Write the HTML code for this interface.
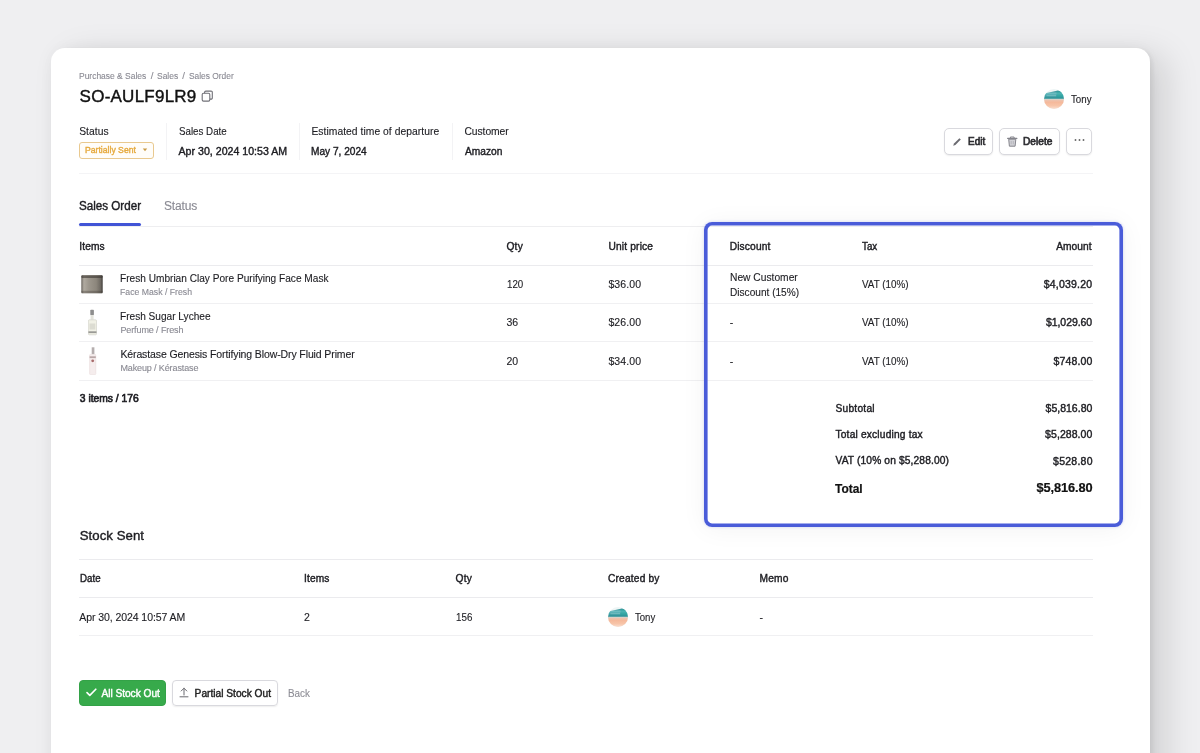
<!DOCTYPE html>
<html><head><meta charset="utf-8">
<style>
*{margin:0;padding:0;box-sizing:border-box}
html,body{width:1200px;height:753px;overflow:hidden;background:#efeff1;font-family:"Liberation Sans",sans-serif;color:#1d1d22}
.card{position:absolute;left:51px;top:48px;width:1099px;height:760px;background:#fff;border-radius:14px;box-shadow:0 0 18px rgba(0,0,0,0.05),16px 7px 34px rgba(0,0,0,0.13),3px 1px 4px rgba(0,0,0,0.05)}
.a{position:absolute;white-space:nowrap;line-height:1}
.vsep{position:absolute;width:1px;background:#f3f3f5;top:122.5px;height:37.5px}
.hl{position:absolute;height:1px;background:#ebebee}
.btn{position:absolute;top:128px;height:27px;border:1px solid #d9d9de;border-radius:5px;background:#fff;box-shadow:0 1px 1.5px rgba(0,0,0,0.07)}
.box{position:absolute;left:703.6px;top:221.9px;width:419.2px;height:305.1px;border-radius:8px;box-shadow:inset 0 0 0 3.6px #4a5cd9,0 0 3px rgba(74,92,217,0.25),0 2px 26px rgba(0,0,0,0.05)}
.av{position:absolute;width:21px;height:21px;border-radius:50%;overflow:hidden;background:linear-gradient(180deg,#1f8f9a 0%,#3aa7ae 25%,#8fcfd0 42%,#f2d2bd 52%,#f4b994 70%,#f7c8aa 100%)}
.wrap{position:absolute;left:0;top:0;width:1200px;height:753px;will-change:transform;overflow:hidden}
</style></head><body><div class="wrap">
<div class="card"></div>

<!-- copy icon -->
<svg class="a" style="left:201px;top:90px" width="13" height="12" viewBox="0 0 13 12"><rect x="1.2" y="3.3" width="7.6" height="7.8" rx="1.3" fill="none" stroke="#707077" stroke-width="1.1"/><path d="M3.6 3.2V2.3a1.2 1.2 0 0 1 1.2-1.2h5.3a1.2 1.2 0 0 1 1.2 1.2v5.6a1.2 1.2 0 0 1-1.2 1.2h-1.2" fill="none" stroke="#707077" stroke-width="1.1"/></svg>

<!-- avatar top -->
<svg class="a" style="left:1043.8px;top:89.4px" width="20" height="20" viewBox="0 0 20 20">
<defs><clipPath id="ca"><circle cx="10" cy="10" r="10"/></clipPath>
<linearGradient id="ta" x1="0" y1="0" x2="0" y2="1"><stop offset="0" stop-color="#2a8990"/><stop offset="0.3" stop-color="#6dbdc1"/><stop offset="0.55" stop-color="#49a8ad"/><stop offset="0.82" stop-color="#2f9197"/><stop offset="1" stop-color="#a6cccb"/></linearGradient>
<linearGradient id="pa" x1="0" y1="0" x2="0" y2="1"><stop offset="0" stop-color="#e9c6b6"/><stop offset="0.3" stop-color="#f5b99b"/><stop offset="0.65" stop-color="#f7c4a8"/><stop offset="1" stop-color="#fadfd1"/></linearGradient></defs>
<g clip-path="url(#ca)"><rect width="20" height="20" fill="#eef5f5"/>
<path d="M0 4.6L6 3.2L14 1.6L17.5 2.4L20 5.5V10.6H0z" fill="url(#ta)"/>
<path d="M12.5 2.2L17.5 2.6L20 5.5V8.5H12.5z" fill="#22a79e" opacity="0.45"/>
<path d="M2.5 6.6H12" stroke="#ffffff" stroke-opacity="0.2" stroke-width="1.1"/>
<rect y="10.4" width="20" height="9.6" fill="url(#pa)"/></g></svg>

<!-- meta -->
<div class="a" style="left:79px;top:142px;width:75px;height:17px;border:1px solid #e9c98f;border-radius:3px;background:#fffdf9"></div>
<svg class="a" style="left:142px;top:148px" width="6" height="4" viewBox="0 0 6 4"><path d="M0.8 0.6h4.4L3 3.3z" fill="#c99a45"/></svg>
<div class="vsep" style="left:166px"></div>
<div class="vsep" style="left:299px"></div>
<div class="vsep" style="left:452px"></div>

<!-- buttons -->
<div class="btn" style="left:944px;width:49px"></div>
<svg class="a" style="left:952px;top:136.5px" width="10" height="10" viewBox="0 0 10 10"><path d="M1.2 8.8L2 6.6L7.4 1.2L8.8 2.6L3.4 8z" fill="#6a6a70"/></svg>
<div class="btn" style="left:999px;width:61px"></div>
<svg class="a" style="left:1007px;top:135.8px" width="10.5" height="11" viewBox="0 0 10.5 11"><path d="M3.4 2V1h3.7v1" fill="none" stroke="#85858c" stroke-width="1"/><path d="M0.6 2.3h9.3" stroke="#85858c" stroke-width="1.2" stroke-linecap="round"/><path d="M1.7 3.2l0.7 7h5.7l0.7-7z" fill="#d2d2d7" stroke="#85858c" stroke-width="1" stroke-linejoin="round"/><path d="M4.2 5v3.3M6.3 5v3.3" stroke="#a9a9b0" stroke-width="0.7"/></svg>
<div class="btn" style="left:1066px;width:26px"></div>
<svg class="a" style="left:1074px;top:138px" width="11" height="4" viewBox="0 0 11 4"><circle cx="1.5" cy="2" r="0.95" fill="#666"/><circle cx="5.5" cy="2" r="0.95" fill="#666"/><circle cx="9.5" cy="2" r="0.95" fill="#666"/></svg>

<div class="hl" style="left:79px;top:172.5px;width:1014px;height:1.5px;background:#f4f4f6"></div>

<!-- tabs -->
<div class="hl" style="left:79px;top:226px;width:1014px;background:#eeeef0"></div>
<div class="a" style="left:79.3px;top:223.3px;width:62px;height:3px;background:#4154d6;border-radius:1.5px"></div>

<div class="hl" style="left:79px;top:264.5px;width:1014px"></div>
<div class="hl" style="left:79px;top:303px;width:1014px;background:#f0f0f2"></div>
<div class="hl" style="left:79px;top:341px;width:1014px;background:#f0f0f2"></div>
<div class="hl" style="left:79px;top:379.5px;width:1014px;background:#f0f0f2"></div>

<!-- product thumbs -->
<svg class="a" style="left:81px;top:274.5px" width="22" height="19" viewBox="0 0 22 19">
<defs><linearGradient id="jg" x1="0" y1="0" x2="1" y2="0"><stop offset="0" stop-color="#6a655f"/><stop offset="0.12" stop-color="#b0aaa0"/><stop offset="0.35" stop-color="#9d978d"/><stop offset="0.7" stop-color="#8c867c"/><stop offset="0.9" stop-color="#6e6962"/><stop offset="1" stop-color="#403c38"/></linearGradient></defs>
<rect x="0.3" y="0.3" width="21.4" height="18" rx="1.2" fill="url(#jg)"/>
<rect x="0.3" y="0.3" width="21.4" height="2.6" rx="1" fill="#3a3531" opacity="0.6"/>
<rect x="0.3" y="15.8" width="21.4" height="2.5" fill="#3e3935" opacity="0.35"/>
</svg>
<svg class="a" style="left:88px;top:309px" width="9" height="27" viewBox="0 0 9 27">
<rect x="2.3" y="0.7" width="3.6" height="5.6" rx="0.8" fill="#8e8e8e"/>
<rect x="2.6" y="6" width="3" height="4.8" fill="#e4e4dc"/>
<rect x="0.4" y="10.8" width="8.1" height="15" rx="1" fill="#f1f1e6" stroke="#cfcfc6" stroke-width="0.6"/>
<rect x="1.5" y="14.5" width="5.8" height="6" fill="#dcdcd2"/>
<rect x="0.4" y="22.3" width="8.1" height="1.8" fill="#9a9a96"/>
</svg>
<svg class="a" style="left:88.5px;top:347px" width="8" height="28" viewBox="0 0 8 28">
<rect x="2.7" y="0.3" width="2.7" height="7" fill="#b5aeae"/>
<rect x="0.6" y="7.4" width="6.2" height="20.2" rx="0.8" fill="#f5eded" stroke="#e6d8d8" stroke-width="0.5"/>
<rect x="0.6" y="9.3" width="6.2" height="1.8" fill="#b9a7a7"/>
<circle cx="3.7" cy="13.8" r="1.4" fill="#a86b6b"/>
</svg>

<!-- blue highlight -->
<div class="box"></div>

<!-- stock sent -->
<div class="hl" style="left:79px;top:559px;width:1014px"></div>
<div class="hl" style="left:79px;top:597px;width:1014px"></div>
<svg class="a" style="left:607.6px;top:606.8px" width="20" height="20" viewBox="0 0 20 20">
<defs><clipPath id="cb"><circle cx="10" cy="10" r="10"/></clipPath>
<linearGradient id="tb" x1="0" y1="0" x2="0" y2="1"><stop offset="0" stop-color="#2a8990"/><stop offset="0.3" stop-color="#6dbdc1"/><stop offset="0.55" stop-color="#49a8ad"/><stop offset="0.82" stop-color="#2f9197"/><stop offset="1" stop-color="#a6cccb"/></linearGradient>
<linearGradient id="pb" x1="0" y1="0" x2="0" y2="1"><stop offset="0" stop-color="#e9c6b6"/><stop offset="0.3" stop-color="#f5b99b"/><stop offset="0.65" stop-color="#f7c4a8"/><stop offset="1" stop-color="#fadfd1"/></linearGradient></defs>
<g clip-path="url(#cb)"><rect width="20" height="20" fill="#eef5f5"/>
<path d="M0 4.6L6 3.2L14 1.6L17.5 2.4L20 5.5V10.6H0z" fill="url(#tb)"/>
<path d="M12.5 2.2L17.5 2.6L20 5.5V8.5H12.5z" fill="#22a79e" opacity="0.45"/>
<path d="M2.5 6.6H12" stroke="#ffffff" stroke-opacity="0.2" stroke-width="1.1"/>
<rect y="10.4" width="20" height="9.6" fill="url(#pb)"/></g></svg>
<div class="hl" style="left:79px;top:634.5px;width:1014px;background:#f0f0f2"></div>

<!-- bottom buttons -->
<div class="a" style="left:79px;top:680px;width:87px;height:26px;background:#37aa4b;border:1px solid #33a247;border-radius:4px"></div>
<svg class="a" style="left:86px;top:688px" width="11" height="9" viewBox="0 0 11 9"><path d="M1 4.6L3.8 7.4L9.8 1.2" fill="none" stroke="#fff" stroke-width="1.6" stroke-linecap="round" stroke-linejoin="round"/></svg>
<div class="a" style="left:172px;top:680px;width:105.5px;height:26.2px;border:1px solid #d9d9de;border-radius:4px;box-shadow:0 1px 1.5px rgba(0,0,0,0.07)"></div>
<svg class="a" style="left:179px;top:687px" width="10" height="11" viewBox="0 0 10 11"><path d="M5 8V1.2M2.2 4L5 1.2L7.8 4M1 9.8h8" fill="none" stroke="#6a6a70" stroke-width="1" stroke-linecap="round" stroke-linejoin="round"/></svg>

<div class="a" style="left:79.20px;top:71.39px;font-size:9.7px;color:#8a8a93;-webkit-text-stroke:0.12px #8a8a93;transform:scaleX(0.8740);transform-origin:0 0;">Purchase &amp; Sales</div>
<div class="a" style="left:150.80px;top:71.39px;font-size:9.7px;color:#8a8a93;-webkit-text-stroke:0.12px #8a8a93;">/</div>
<div class="a" style="left:157.00px;top:71.39px;font-size:9.7px;color:#8a8a93;-webkit-text-stroke:0.12px #8a8a93;transform:scaleX(0.8750);transform-origin:0 0;">Sales</div>
<div class="a" style="left:182.30px;top:71.39px;font-size:9.7px;color:#8a8a93;-webkit-text-stroke:0.12px #8a8a93;">/</div>
<div class="a" style="left:189.00px;top:71.39px;font-size:9.7px;color:#8a8a93;-webkit-text-stroke:0.12px #8a8a93;transform:scaleX(0.8654);transform-origin:0 0;">Sales Order</div>
<div class="a" style="left:79.60px;top:87.81px;font-size:17px;color:#111;-webkit-text-stroke:0.4px #111;letter-spacing:0.240px;">SO-AULF9LR9</div>
<div class="a" style="left:1070.70px;top:94.11px;font-size:10.5px;color:#1d1d22;-webkit-text-stroke:0.12px #1d1d22;transform:scaleX(0.9261);transform-origin:0 0;">Tony</div>
<div class="a" style="left:79.20px;top:127.08px;font-size:10.3px;color:#1d1d22;-webkit-text-stroke:0.12px #1d1d22;letter-spacing:0.060px;">Status</div>
<div class="a" style="left:178.50px;top:127.08px;font-size:10.3px;color:#1d1d22;-webkit-text-stroke:0.12px #1d1d22;transform:scaleX(0.9471);transform-origin:0 0;">Sales Date</div>
<div class="a" style="left:311.40px;top:127.08px;font-size:10.3px;color:#1d1d22;-webkit-text-stroke:0.12px #1d1d22;letter-spacing:0.050px;">Estimated time of departure</div>
<div class="a" style="left:464.50px;top:127.08px;font-size:10.3px;color:#1d1d22;-webkit-text-stroke:0.12px #1d1d22;letter-spacing:-0.071px;">Customer</div>
<div class="a" style="left:178.50px;top:145.53px;font-size:10.6px;color:#1d1d22;-webkit-text-stroke:0.4px #1d1d22;letter-spacing:0.015px;">Apr 30, 2024 10:53 AM</div>
<div class="a" style="left:311.40px;top:145.53px;font-size:10.6px;color:#1d1d22;-webkit-text-stroke:0.4px #1d1d22;transform:scaleX(0.9559);transform-origin:0 0;">May 7, 2024</div>
<div class="a" style="left:464.50px;top:145.53px;font-size:10.6px;color:#1d1d22;-webkit-text-stroke:0.4px #1d1d22;transform:scaleX(0.9615);transform-origin:0 0;">Amazon</div>
<div class="a" style="left:85.00px;top:146.21px;font-size:9.2px;color:#e6aa3e;-webkit-text-stroke:0.4px #e6aa3e;transform:scaleX(0.9400);transform-origin:0 0;">Partially Sent</div>
<div class="a" style="left:967.70px;top:135.81px;font-size:10.5px;color:#2a2a2e;-webkit-text-stroke:0.65px #2a2a2e;transform:scaleX(0.9474);transform-origin:0 0;">Edit</div>
<div class="a" style="left:1022.70px;top:135.81px;font-size:10.5px;color:#2a2a2e;-webkit-text-stroke:0.65px #2a2a2e;transform:scaleX(0.9677);transform-origin:0 0;">Delete</div>
<div class="a" style="left:79.30px;top:200.14px;font-size:12px;color:#1d1d22;-webkit-text-stroke:0.4px #1d1d22;transform:scaleX(0.9688);transform-origin:0 0;">Sales Order</div>
<div class="a" style="left:164.00px;top:200.14px;font-size:12px;color:#8a8a93;-webkit-text-stroke:0.12px #8a8a93;letter-spacing:-0.140px;">Status</div>
<div class="a" style="left:79.30px;top:242.07px;font-size:10.2px;color:#1d1d22;-webkit-text-stroke:0.4px #1d1d22;letter-spacing:0.100px;">Items</div>
<div class="a" style="left:506.50px;top:242.07px;font-size:10.2px;color:#1d1d22;-webkit-text-stroke:0.4px #1d1d22;letter-spacing:0.200px;">Qty</div>
<div class="a" style="left:608.40px;top:242.07px;font-size:10.2px;color:#1d1d22;-webkit-text-stroke:0.4px #1d1d22;letter-spacing:0.178px;">Unit price</div>
<div class="a" style="left:729.70px;top:242.07px;font-size:10.2px;color:#1d1d22;-webkit-text-stroke:0.4px #1d1d22;letter-spacing:0.143px;">Discount</div>
<div class="a" style="left:862.20px;top:242.07px;font-size:10.2px;color:#1d1d22;-webkit-text-stroke:0.4px #1d1d22;transform:scaleX(0.9625);transform-origin:0 0;">Tax</div>
<div class="a" style="left:1056.20px;top:242.07px;font-size:10.2px;color:#1d1d22;-webkit-text-stroke:0.4px #1d1d22;letter-spacing:0.040px;">Amount</div>
<div class="a" style="left:120.40px;top:273.01px;font-size:10.5px;color:#1d1d22;-webkit-text-stroke:0.12px #1d1d22;transform:scaleX(0.9631);transform-origin:0 0;">Fresh Umbrian Clay Pore Purifying Face Mask</div>
<div class="a" style="left:120.40px;top:287.68px;font-size:9.0px;color:#8a8a93;-webkit-text-stroke:0.12px #8a8a93;transform:scaleX(0.9662);transform-origin:0 0;">Face Mask / Fresh</div>
<div class="a" style="left:506.50px;top:279.11px;font-size:10.5px;color:#1d1d22;-webkit-text-stroke:0.12px #1d1d22;transform:scaleX(0.9278);transform-origin:0 0;">120</div>
<div class="a" style="left:608.40px;top:279.11px;font-size:10.5px;color:#1d1d22;-webkit-text-stroke:0.12px #1d1d22;letter-spacing:0.100px;">$36.00</div>
<div class="a" style="left:729.70px;top:271.61px;font-size:10.5px;color:#1d1d22;-webkit-text-stroke:0.12px #1d1d22;transform:scaleX(0.9757);transform-origin:0 0;">New Customer</div>
<div class="a" style="left:729.70px;top:286.71px;font-size:10.5px;color:#1d1d22;-webkit-text-stroke:0.12px #1d1d22;transform:scaleX(0.9625);transform-origin:0 0;">Discount (15%)</div>
<div class="a" style="left:862.20px;top:279.11px;font-size:10.5px;color:#1d1d22;-webkit-text-stroke:0.12px #1d1d22;transform:scaleX(0.9388);transform-origin:0 0;">VAT (10%)</div>
<div class="a" style="left:1043.70px;top:279.11px;font-size:10.5px;color:#1d1d22;-webkit-text-stroke:0.4px #1d1d22;letter-spacing:0.213px;">$4,039.20</div>
<div class="a" style="left:120.40px;top:311.01px;font-size:10.5px;color:#1d1d22;-webkit-text-stroke:0.12px #1d1d22;transform:scaleX(0.9617);transform-origin:0 0;">Fresh Sugar Lychee</div>
<div class="a" style="left:120.40px;top:325.68px;font-size:9.0px;color:#8a8a93;-webkit-text-stroke:0.12px #8a8a93;letter-spacing:-0.100px;">Perfume / Fresh</div>
<div class="a" style="left:506.50px;top:317.31px;font-size:10.5px;color:#1d1d22;-webkit-text-stroke:0.12px #1d1d22;">36</div>
<div class="a" style="left:608.40px;top:317.31px;font-size:10.5px;color:#1d1d22;-webkit-text-stroke:0.12px #1d1d22;letter-spacing:0.100px;">$26.00</div>
<div class="a" style="left:729.70px;top:317.31px;font-size:10.5px;color:#1d1d22;-webkit-text-stroke:0.12px #1d1d22;">-</div>
<div class="a" style="left:862.20px;top:317.31px;font-size:10.5px;color:#1d1d22;-webkit-text-stroke:0.12px #1d1d22;transform:scaleX(0.9388);transform-origin:0 0;">VAT (10%)</div>
<div class="a" style="left:1046.00px;top:317.31px;font-size:10.5px;color:#1d1d22;-webkit-text-stroke:0.4px #1d1d22;letter-spacing:-0.075px;">$1,029.60</div>
<div class="a" style="left:120.40px;top:349.31px;font-size:10.5px;color:#1d1d22;-webkit-text-stroke:0.12px #1d1d22;letter-spacing:-0.112px;">Kérastase Genesis Fortifying Blow-Dry Fluid Primer</div>
<div class="a" style="left:120.40px;top:363.98px;font-size:9.0px;color:#8a8a93;-webkit-text-stroke:0.12px #8a8a93;letter-spacing:-0.118px;">Makeup / Kérastase</div>
<div class="a" style="left:506.50px;top:355.61px;font-size:10.5px;color:#1d1d22;-webkit-text-stroke:0.12px #1d1d22;">20</div>
<div class="a" style="left:608.40px;top:355.61px;font-size:10.5px;color:#1d1d22;-webkit-text-stroke:0.12px #1d1d22;letter-spacing:0.100px;">$34.00</div>
<div class="a" style="left:729.70px;top:355.61px;font-size:10.5px;color:#1d1d22;-webkit-text-stroke:0.12px #1d1d22;">-</div>
<div class="a" style="left:862.20px;top:355.61px;font-size:10.5px;color:#1d1d22;-webkit-text-stroke:0.12px #1d1d22;transform:scaleX(0.9388);transform-origin:0 0;">VAT (10%)</div>
<div class="a" style="left:1053.40px;top:355.61px;font-size:10.5px;color:#1d1d22;-webkit-text-stroke:0.4px #1d1d22;letter-spacing:0.167px;">$748.00</div>
<div class="a" style="left:79.80px;top:393.98px;font-size:10.3px;color:#1d1d22;-webkit-text-stroke:0.65px #1d1d22;">3 items / 176</div>
<div class="a" style="left:835.50px;top:404.07px;font-size:10.2px;color:#1d1d22;-webkit-text-stroke:0.4px #1d1d22;letter-spacing:0.243px;">Subtotal</div>
<div class="a" style="left:1045.60px;top:403.21px;font-size:10.5px;color:#1d1d22;-webkit-text-stroke:0.4px #1d1d22;">$5,816.80</div>
<div class="a" style="left:835.50px;top:430.17px;font-size:10.2px;color:#1d1d22;-webkit-text-stroke:0.4px #1d1d22;letter-spacing:0.183px;">Total excluding tax</div>
<div class="a" style="left:1045.10px;top:429.31px;font-size:10.5px;color:#1d1d22;-webkit-text-stroke:0.4px #1d1d22;letter-spacing:0.062px;">$5,288.00</div>
<div class="a" style="left:835.50px;top:456.37px;font-size:10.2px;color:#1d1d22;-webkit-text-stroke:0.4px #1d1d22;letter-spacing:0.143px;">VAT (10% on $5,288.00)</div>
<div class="a" style="left:1053.10px;top:455.51px;font-size:10.5px;color:#1d1d22;-webkit-text-stroke:0.4px #1d1d22;letter-spacing:0.250px;">$528.80</div>
<div class="a" style="left:834.80px;top:482.80px;font-size:12.4px;color:#111;font-weight:bold;-webkit-text-stroke:0.2px #111;transform:scaleX(0.9643);transform-origin:0 0;">Total</div>
<div class="a" style="left:1036.60px;top:482.46px;font-size:12.8px;color:#111;font-weight:bold;-webkit-text-stroke:0.2px #111;letter-spacing:-0.125px;">$5,816.80</div>
<div class="a" style="left:79.75px;top:529.03px;font-size:13.2px;color:#1d1d22;-webkit-text-stroke:0.4px #1d1d22;letter-spacing:0.044px;">Stock Sent</div>
<div class="a" style="left:79.75px;top:573.77px;font-size:10.2px;color:#1d1d22;-webkit-text-stroke:0.4px #1d1d22;transform:scaleX(0.9545);transform-origin:0 0;">Date</div>
<div class="a" style="left:304.00px;top:573.77px;font-size:10.2px;color:#1d1d22;-webkit-text-stroke:0.4px #1d1d22;letter-spacing:0.125px;">Items</div>
<div class="a" style="left:455.60px;top:573.77px;font-size:10.2px;color:#1d1d22;-webkit-text-stroke:0.4px #1d1d22;letter-spacing:0.200px;">Qty</div>
<div class="a" style="left:608.00px;top:573.77px;font-size:10.2px;color:#1d1d22;-webkit-text-stroke:0.4px #1d1d22;letter-spacing:0.178px;">Created by</div>
<div class="a" style="left:759.50px;top:573.77px;font-size:10.2px;color:#1d1d22;-webkit-text-stroke:0.4px #1d1d22;letter-spacing:0.167px;">Memo</div>
<div class="a" style="left:79.30px;top:611.91px;font-size:10.5px;color:#1d1d22;-webkit-text-stroke:0.12px #1d1d22;letter-spacing:-0.075px;">Apr 30, 2024 10:57 AM</div>
<div class="a" style="left:304.00px;top:611.91px;font-size:10.5px;color:#1d1d22;-webkit-text-stroke:0.12px #1d1d22;">2</div>
<div class="a" style="left:455.60px;top:611.91px;font-size:10.5px;color:#1d1d22;-webkit-text-stroke:0.12px #1d1d22;transform:scaleX(0.9333);transform-origin:0 0;">156</div>
<div class="a" style="left:635.00px;top:611.91px;font-size:10.5px;color:#1d1d22;-webkit-text-stroke:0.12px #1d1d22;transform:scaleX(0.9130);transform-origin:0 0;">Tony</div>
<div class="a" style="left:759.50px;top:611.91px;font-size:10.5px;color:#1d1d22;-webkit-text-stroke:0.12px #1d1d22;">-</div>
<div class="a" style="left:101.40px;top:688.67px;font-size:10.2px;color:#ffffff;-webkit-text-stroke:0.4px #ffffff;letter-spacing:-0.033px;">All Stock Out</div>
<div class="a" style="left:194.60px;top:688.67px;font-size:10.2px;color:#222;-webkit-text-stroke:0.4px #222;">Partial Stock Out</div>
<div class="a" style="left:287.80px;top:688.67px;font-size:10.2px;color:#8e8e96;-webkit-text-stroke:0.12px #8e8e96;transform:scaleX(0.9696);transform-origin:0 0;">Back</div>
</div></body></html>
